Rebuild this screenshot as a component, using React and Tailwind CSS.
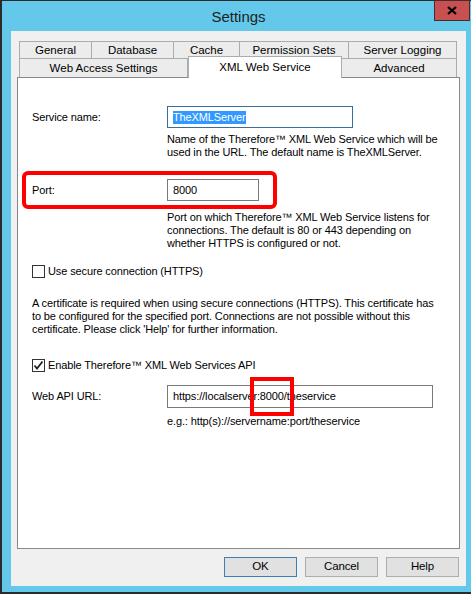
import React from 'react';

const FONT = { fontFamily: '"Liberation Sans", Arial, sans-serif' };

const ROW1 = [
  { label: 'General', w: 73 },
  { label: 'Database', w: 82 },
  { label: 'Cache', w: 66 },
  { label: 'Permission Sets', w: 109 },
  { label: 'Server Logging', w: 108 },
];

const ROW2 = [
  { label: 'Web Access Settings', w: 169 },
  { label: 'XML Web Service', w: 154, active: true },
  { label: 'Advanced', w: 115 },
];

function Checkbox({ checked }) {
  return (
    <span className="w-[13px] h-[13px] border border-[#333333] bg-white flex items-center justify-center shrink-0">
      {checked && (
        <svg width="11" height="11" viewBox="0 0 11 11">
          <path d="M1.5 5.5 L4 8.5 L9.5 1.5" fill="none" stroke="#222" strokeWidth="1.8" />
        </svg>
      )}
    </span>
  );
}

function Btn({ children, focus }) {
  return (
    <button
      className={
        'w-[73px] h-[20px] bg-[#e1e1e1] border text-[11.5px] text-black leading-none ' +
        (focus ? 'border-[#3c7fb1]' : 'border-[#adadad]')
      }
    >
      {children}
    </button>
  );
}

export default function App() {
  return (
    <div
      className="w-[471px] h-[594px] bg-[#63c8ea] border-l-2 border-t border-b-2 border-[#2b2b2b] flex flex-col text-black text-[11px] leading-[13px] tracking-[-0.12px] whitespace-nowrap"
      style={FONT}
    >
      {/* title bar */}
      <div className="relative h-[30px] shrink-0 flex items-center justify-center">
        <span className="text-[15px] text-[#1e1e1e] pl-[4px] tracking-normal">Settings</span>
        <div className="absolute right-[1px] top-[-1px] w-[36px] h-[21px] bg-[#c75050] border border-[#4a2b2b] flex items-center justify-center">
          <svg width="10" height="9" viewBox="0 0 10 9">
            <path d="M1 1 L9 8 M9 1 L1 8" stroke="#000" strokeWidth="2.2" />
          </svg>
        </div>
      </div>

      {/* client area */}
      <div className="flex-1 ml-[9px] mr-[5px] mb-[6px] bg-[#f0f0f0] flex flex-col px-[6px] pt-[10px] pb-[8px]">
        {/* tabs */}
        <div className="pl-[2px] flex flex-col tracking-normal">
          <div className="flex h-[17px]">
            {ROW1.map((t, i) => (
              <div
                key={t.label}
                className={
                  'h-full bg-[#ececec] border-t border-r border-[#acacac] flex items-center justify-center text-[11.5px] ' +
                  (i === 0 ? 'border-l' : '')
                }
                style={{ width: t.w }}
              >
                {t.label}
              </div>
            ))}
          </div>
          <div className="flex h-[19px] items-end relative z-10">
            {ROW2.map((t, i) =>
              t.active ? (
                <div
                  key={t.label}
                  className="h-[22px] -mb-px bg-white border-t border-l border-r border-[#acacac] flex items-start justify-center pt-[4px] text-[11.5px]"
                  style={{ width: t.w }}
                >
                  {t.label}
                </div>
              ) : (
                <div
                  key={t.label}
                  className={
                    'h-full bg-[#ececec] border-t border-r border-[#acacac] flex items-center justify-center text-[11.5px] ' +
                    (i === 0 ? 'border-l' : '')
                  }
                  style={{ width: t.w }}
                >
                  {t.label}
                </div>
              )
            )}
          </div>
        </div>

        {/* panel */}
        <div className="h-[472px] bg-white border border-[#898989] pl-[14px] pt-[28px] flex flex-col">
          <div className="flex items-center">
            <span className="w-[135px]">Service name:</span>
            <div className="w-[186px] h-[22px] border border-[#3a6d99] flex items-center pl-[5px]">
              <span className="bg-[#3399ff] text-white">TheXMLServer</span>
            </div>
          </div>
          <div className="ml-[135px] mt-[5px]">
            Name of the Therefore™ XML Web Service which will be
            <br />
            used in the URL. The default name is TheXMLServer.
          </div>

          <div className="relative flex items-center mt-[20px]">
            <span className="w-[135px]">Port:</span>
            <div className="w-[92px] h-[22px] border border-[#7a7a7a] flex items-center pl-[5px]">8000</div>
            <div className="absolute left-[-10px] top-[-8px] w-[255px] h-[38px] border-[4px] border-[#ff0000] rounded-[6px]" />
          </div>
          <div className="ml-[135px] mt-[10px]">
            Port on which Therefore™ XML Web Service listens for
            <br />
            connections. The default is 80 or 443 depending on
            <br />
            whether HTTPS is configured or not.
          </div>

          <div className="flex items-center gap-[3px] mt-[15px]">
            <Checkbox />
            <span>Use secure connection (HTTPS)</span>
          </div>

          <div className="mt-[19px]">
            A certificate is required when using secure connections (HTTPS). This certificate has
            <br />
            to be configured for the specified port. Connections are not possible without this
            <br />
            certificate. Please click 'Help' for further information.
          </div>

          <div className="flex items-center gap-[3px] mt-[23px]">
            <Checkbox checked />
            <span>Enable Therefore™ XML Web Services API</span>
          </div>

          <div className="flex items-center mt-[13px]">
            <span className="w-[135px]">Web API URL:</span>
            <div className="relative w-[266px] h-[23px] border border-[#7a7a7a] flex items-center pl-[5px]">
              https://localserver:8000/theservice
              <div className="absolute left-[82px] top-[-9px] w-[44px] h-[39px] border-[4px] border-[#ff0000]" />
            </div>
          </div>
          <div className="ml-[135px] mt-[7px]">e.g.: http(s)://servername:port/theservice</div>
        </div>

        {/* buttons */}
        <div className="flex justify-end gap-[8px] mt-[8px] pr-[1px]">
          <Btn focus>OK</Btn>
          <Btn>Cancel</Btn>
          <Btn>Help</Btn>
        </div>
      </div>
    </div>
  );
}
